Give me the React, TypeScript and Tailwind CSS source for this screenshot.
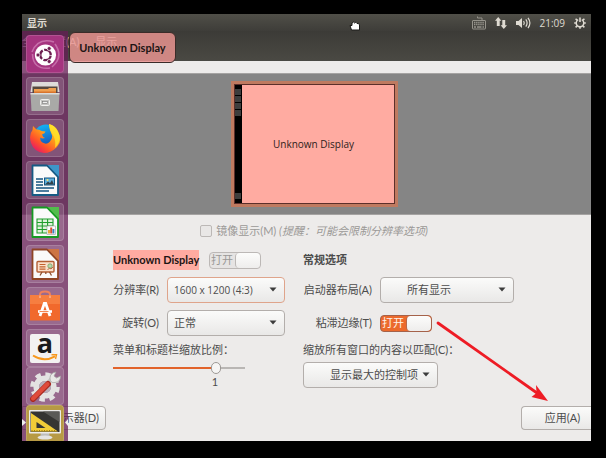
import { useState, type ReactNode } from "react";

const buttonLook =
  "border border-[#b3aeab] bg-linear-to-b from-[#fbfbfa] to-[#e9e8e7] text-[#4c4c4c]";

/* ---------- indicator icons ---------- */

function KeyboardIcon() {
  return (
    <svg width="14" height="14" viewBox="0 0 14 14" fill="none" stroke="#96948c" strokeWidth="1">
      <path d="M5.5 0.5v1.500h4.500V4" />
      <rect x="0.5" y="4.500" width="13" height="8.500" rx="0.5" />
      <path d="M2 6.500h10M2 8.500h10" strokeWidth="1.300" strokeDasharray="1.4 0.7" />
      <path d="M2 11h2M5 11h4.5M10.5 11H12" strokeWidth="1.300" />
    </svg>
  );
}

function NetworkIcon() {
  return (
    <svg width="12" height="12" viewBox="0 0 12 12" fill="#dfdbd2">
      <path d="M3.200 0 6.400 3.800H4.700V9H1.800V3.800H0z" />
      <path d="M8.800 12 5.600 8.200h1.700V3h2.900v5.200H12z" />
    </svg>
  );
}

function VolumeIcon() {
  return (
    <svg width="15" height="12" viewBox="0 0 15 12">
      <path d="M0 4h2.5L6 1v10L2.5 8H0z" fill="#dfdbd2" />
      <g fill="none" stroke="#dfdbd2" strokeWidth="1.2">
        <path d="M7.6 4q1.4 2 0 4" />
        <path d="M9.8 2.4q2.6 3.6 0 7.2" />
        <path d="M12 .8q3.8 5.2 0 10.4" />
      </g>
    </svg>
  );
}

function SessionIcon() {
  return (
    <svg width="12" height="12" viewBox="0 0 12 12" fill="none" stroke="#dfdbd2">
      <path d="M4.2 2.7a3.8 3.8 0 1 0 3.6 0" strokeWidth="1.5" />
      <path d="M6 .5v4.6" strokeWidth="1.6" />
      <path
        d="M2.9 3 1.6 1.7M9.1 3l1.3-1.3M1.9 6H.2M10.1 6h1.7M3 9 1.6 10.4M9 9l1.4 1.4M6 10v1.8"
        strokeWidth="1.6"
      />
    </svg>
  );
}

/* ---------- launcher icons, all on a 32 unit grid ---------- */

function DashIcon() {
  return (
    <svg viewBox="0 0 32 32" className="size-8">
      <g fill="none" stroke="#f0b4de" strokeOpacity="0.450" strokeWidth="1.6">
        <path d="M3 14Q9-1 25 4" />
        <path d="M26 6q9 13-3 23" />
        <path d="M21 30Q4 32 3.500 16" />
      </g>
      <circle cx="16.500" cy="17" r="10.600" fill="#fff" />
      <circle
        cx="16.500"
        cy="17"
        r="5.200"
        fill="none"
        stroke="#6d1f50"
        strokeWidth="2.3"
        strokeDasharray="9.4 1.49"
        strokeDashoffset="-0.7"
      />
      <g fill="#6d1f50" stroke="#fff" strokeWidth="0.7">
        <circle cx="9" cy="17" r="2" />
        <circle cx="20.200" cy="10.500" r="2" />
        <circle cx="20.200" cy="23.500" r="2" />
      </g>
    </svg>
  );
}

function FilesIcon() {
  return (
    <svg viewBox="0 0 32 32" className="size-8">
      <path d="M3 2h26l1.5 10h-29z" fill="#dedcda" />
      <rect x="3.5" y="6.5" width="25" height="9" fill="#57493f" />
      <path d="M5 9h14l1-1h7v7H5z" fill="#f0a050" />
      <path d="M5 11.5h22V15H5z" fill="#d9742c" />
      <path d="M1.5 13h29l-1 18H2.500z" fill="#a9a9a7" />
      <path d="M1.500 13h29v1.500h-29z" fill="#dcdcda" />
      <rect x="11.500" y="19.500" width="9" height="6" rx="1" fill="#c5c5c3" stroke="#efefed" />
      <rect x="13.500" y="21.500" width="5" height="2" fill="#eee" stroke="#777" strokeWidth="0.600" />
    </svg>
  );
}

function FirefoxIcon() {
  return (
    <svg viewBox="0 0 32 32" className="size-8">
      <defs>
        <linearGradient id="fox" x1="0.85" y1="0.1" x2="0.2" y2="0.9">
          <stop offset="0" stopColor="#ffe226" />
          <stop offset="0.4" stopColor="#ff9a1a" />
          <stop offset="0.75" stopColor="#ff4f2b" />
          <stop offset="1" stopColor="#e8205f" />
        </linearGradient>
        <linearGradient id="globe" x1="0.3" y1="0" x2="0.6" y2="1">
          <stop offset="0" stopColor="#12b5f5" />
          <stop offset="1" stopColor="#1743ad" />
        </linearGradient>
      </defs>
      <circle cx="17" cy="15" r="12.500" fill="url(#globe)" />
      <path
        d="M20 2q6 1 9 8 5 9-1 15-6 6-13 6Q5 30 2 21-.5 13 3.500 8l.5-4 3.500 3.500q3-.5 5 1.500l4 .5q-.5 2-3.500 3 .5 2.500 3 3.500-3 1-4.500-.5-1 3 2 5 4 2.500 7-.5 4-4 2-8-2-3.500-2.500-9.500z"
        fill="url(#fox)"
      />
      <path d="M20 2q8 2 10.500 11 1 8-4.500 13 1-7-1.500-12Q20 7 20 2z" fill="#ffe22a" fillOpacity="0.800" />
    </svg>
  );
}

function OfficeSheet({ edge, corner, children }: { edge: string; corner: string; children: ReactNode }) {
  return (
    <svg viewBox="0 0 32 32" className="size-8">
      <path d="M17 1h13v14z" fill={corner} />
      <path d="M3.500 1.500h14.500L29 13v18H3.500z" fill="#fafafa" stroke={edge} strokeWidth="1.800" strokeLinejoin="round" />
      {children}
    </svg>
  );
}

function WriterIcon() {
  return (
    <OfficeSheet edge="#155a84" corner="#3d96c9">
      <path d="M7 15h7M7 18h7M7 21h7M7 24h18M7 27h13" stroke="#155480" strokeWidth="1.600" />
      <rect x="15.500" y="14" width="10" height="7" fill="#5fb0dd" stroke="#155480" />
      <path d="m16 20.500 3-3 2 1.500 2-3 2 4.500z" fill="#35424a" />
      <circle cx="18.500" cy="16" r="1" fill="#ffe36b" />
    </OfficeSheet>
  );
}

function CalcIcon() {
  return (
    <OfficeSheet edge="#159a22" corner="#52bd4c">
      <rect x="8" y="13" width="16" height="14" fill="#def3da" />
      <path
        d="M8 13h16v14H8zM8 16.500h16M8 20h16M8 23.500h16M13.300 13v14M18.600 13v14"
        fill="none"
        stroke="#1f9e2c"
        strokeWidth="1.100"
      />
      <rect x="18" y="20" width="8.500" height="8.500" fill="#fff" stroke="#999" strokeWidth="0.600" />
      <path d="M19 24h2v3.500h-2z" fill="#e7a83a" />
      <path d="M21.200 21.500h2v6h-2z" fill="#d9502e" />
      <path d="M23.400 23h2v4.500h-2z" fill="#3f7fbe" />
    </OfficeSheet>
  );
}

function ImpressIcon() {
  return (
    <OfficeSheet edge="#8f4424" corner="#cd7443">
      <rect x="8" y="13.500" width="17" height="10.500" rx="1" fill="#fbe0cb" stroke="#b35f35" strokeWidth="1.400" />
      <path d="M10.500 16.500h6M10.500 18.800h6M10.500 21.200h6" stroke="#c2622e" strokeWidth="1.200" />
      <circle cx="21" cy="18" r="2.200" fill="#b9d8ae" stroke="#6a9a5a" strokeWidth="0.700" />
      <path d="m18.500 22 2-2 1.500 1 2-2" fill="none" stroke="#b35f35" strokeWidth="0.900" />
      <path d="m13 24-2 3.500M20.500 24l2 3.500M16.800 24v2" stroke="#8f4f2d" strokeWidth="1.300" />
    </OfficeSheet>
  );
}

function SoftwareIcon() {
  return (
    <svg viewBox="0 0 32 32" className="size-8">
      <path d="M11 8V4.500q0-3 5-3t5 3V8" fill="none" stroke="#f0805a" strokeWidth="2" />
      <path d="M1 5h30v25.500H1z" fill="#f1692c" />
      <path d="M1 5h30v9H1z" fill="#fa8c4e" fillOpacity="0.600" />
      <path d="M11 5.500V8M21 5.500V8" stroke="#f7b08e" strokeWidth="1.600" />
      <path d="M11 26 15.300 13.500h1.400L21 26" fill="none" stroke="#fff" strokeWidth="2.800" />
      <path d="M9 21.500h14" stroke="#fff" strokeWidth="2.600" />
      <path d="M10.500 21.500h9" stroke="#f1692c" strokeWidth="0.800" />
    </svg>
  );
}

function AmazonIcon() {
  return (
    <span className="flex h-[29px] w-[30px] flex-col items-center rounded-xs bg-[#f3f2f1]">
      <span className="h-5 font-['Open_Sans'] text-[27px] leading-[18px] font-bold text-[#1b1b1b]">a</span>
      <svg width="26" height="8" viewBox="0 0 26 8" fill="none" stroke="#f7981d">
        <path d="M1 1.500q11 7 22 .8" strokeWidth="2" />
        <path d="M19.500.8h5L23.500 5" strokeWidth="1.400" />
      </svg>
    </span>
  );
}

function SettingsIcon() {
  return (
    <svg viewBox="0 0 32 32" className="size-8">
      <circle cx="16" cy="17" r="12.800" fill="none" stroke="#e4e3e2" strokeWidth="4" strokeDasharray="5.400 4.650" />
      <circle cx="16" cy="17" r="8.800" fill="none" stroke="#e4e3e2" strokeWidth="5.500" />
      <circle cx="16" cy="17" r="6" fill="#b9aeb8" />
      <path d="M16 16 24 7" stroke="#c9c8c6" strokeWidth="4" />
      <path d="M21 8q0-5 6-6l-2 4 2.500 2 4-2q0 6-5.500 6.500-5 1-5-4.500z" fill="#e9e8e6" stroke="#a5a3a2" strokeWidth="0.700" />
      <path d="M4 29 19 14" stroke="#a92a20" strokeWidth="6" strokeLinecap="round" />
      <path d="M4 28.500 18.500 14" stroke="#df4b3b" strokeWidth="4" strokeLinecap="round" />
    </svg>
  );
}

function DisplayIcon() {
  return (
    <svg viewBox="0 0 32 32" className="size-8">
      <path d="M12 25h8l1 4H11z" fill="#bdbdbb" />
      <ellipse cx="16" cy="29.500" rx="7.500" ry="2" fill="#e4e4e2" />
      <rect x="0" y="2" width="32" height="23.500" rx="1" fill="#ecebea" />
      <rect x="1.500" y="3.500" width="29" height="20.500" fill="#353533" />
      <path d="M14 3.500h16.500V14z" fill="#5a5a57" />
      <path d="M2 5v18.500h27z" fill="#f1cc38" />
      <path d="M7.500 14v6h9z" fill="#353533" />
      <path d="M2.500 22.500h25" stroke="#a07d10" strokeDasharray="1 1.500" />
    </svg>
  );
}

const apps: { name: string; icon: ReactNode; tile: string }[] = [
  { name: "Dash", icon: <DashIcon />, tile: "bg-[#a5347f]" },
  { name: "Files", icon: <FilesIcon />, tile: "bg-white/15" },
  { name: "Firefox", icon: <FirefoxIcon />, tile: "bg-white/15" },
  { name: "Writer", icon: <WriterIcon />, tile: "bg-white/15" },
  { name: "Calc", icon: <CalcIcon />, tile: "bg-white/15" },
  { name: "Impress", icon: <ImpressIcon />, tile: "bg-white/15" },
  { name: "Software", icon: <SoftwareIcon />, tile: "bg-white/15" },
  { name: "Amazon", icon: <AmazonIcon />, tile: "bg-white/15" },
  { name: "Settings", icon: <SettingsIcon />, tile: "-mt-1 bg-white/15" },
  { name: "Displays", icon: <DisplayIcon />, tile: "-mt-1 bg-[#b79a44]" },
];

function Launcher() {
  return (
    <nav className="absolute top-[17px] bottom-0 left-0 flex w-[46px] flex-col items-center gap-1 overflow-hidden bg-[#651e56]/75 pt-1">
      {apps.map((app) => (
        <button
          key={app.name}
          aria-label={app.name}
          className={`flex h-[38px] w-[38px] shrink-0 items-center justify-center rounded-sm border border-white/15 ${app.tile}`}
        >
          {app.icon}
        </button>
      ))}
      <svg className="absolute bottom-[15px] left-0" width="4" height="7" viewBox="0 0 4 7" fill="#eee">
        <path d="M0 0l4 3.500L0 7z" />
      </svg>
      <svg className="absolute right-0 bottom-[15px]" width="3" height="7" viewBox="0 0 3 7" fill="#eee">
        <path d="M3 0 0 3.500 3 7z" />
      </svg>
    </nav>
  );
}

/* ---------- form parts ---------- */

function Dropdown({ id, value, look, width }: { id: string; value: string; look: string; width: string }) {
  return (
    <div className={`relative shrink-0 ${width}`}>
      <select
        id={id}
        className={`h-[26px] w-full appearance-none rounded-sm border bg-linear-to-b from-[#fbfbfa] to-[#e9e8e7] text-[#4c4c4c] ${look}`}
      >
        <option>{value}</option>
      </select>
      <svg
        className="pointer-events-none absolute top-[10px] right-2"
        width="8"
        height="5"
        viewBox="0 0 8 5"
        fill="#3c3c3c"
      >
        <path d="M.5.500h7L4 4.500z" />
      </svg>
    </div>
  );
}

function Switch({ id, label, disabled = false }: { id: string; label: string; disabled?: boolean }) {
  const [on, setOn] = useState(true);
  return (
    <label
      htmlFor={id}
      className={`flex h-[17px] w-[52px] shrink-0 items-center justify-between overflow-hidden rounded-sm border ${
        disabled ? "border-[#bcb8b6] bg-[#e6e4e3] text-[#9a9896]" : "border-[#a5624a] bg-[#ec6a2c] text-[#fff3ea]"
      }`}
    >
      <input
        id={id}
        type="checkbox"
        role="switch"
        aria-label={label}
        checked={on}
        disabled={disabled}
        onChange={(e) => setOn(e.target.checked)}
        className="sr-only"
      />
      <span className="pl-px leading-4">打开</span>
      <span
        className={`h-full w-[25px] rounded-sm border-l bg-linear-to-b from-[#fcfcfb] to-[#eeedec] ${
          disabled ? "border-[#bcb8b6]" : "border-[#b8694a]"
        }`}
      />
    </label>
  );
}

function MonitorPreview() {
  return (
    <div className="flex h-[126px] w-[167px] border-[3px] border-[#bf7a60] bg-[#ffaba1]">
      <div className="flex w-full border border-[#5c2f2a]">
        <div className="flex w-[7px] flex-col items-center bg-black py-1">
          <div className="flex flex-col gap-px">
            <span className="size-1.5 bg-[#3d3d3d]" />
            <span className="size-1.5 bg-[#3d3d3d]" />
            <span className="size-1.5 bg-[#3d3d3d]" />
            <span className="size-1.5 bg-[#3d3d3d]" />
          </div>
          <span className="mt-auto size-1.5 bg-[#3d3d3d]" />
        </div>
        <div className="flex flex-1 items-center justify-center pr-2 text-[#2e1d1b]">
          <span className="font-['Open_Sans'] text-[10px]">Unknown Display</span>
        </div>
      </div>
    </div>
  );
}

export default function App() {
  const [scale, setScale] = useState(1);
  return (
    <div className="flex min-h-screen flex-col bg-black pt-[14px] pr-[15px] pb-[17px] pl-[22px] font-['Lato','Noto_Sans_CJK_SC',sans-serif] text-[11px] leading-4 text-[#4c4c4c]">
      <div className="relative flex flex-1 flex-col overflow-hidden bg-[#edebea]">
        <header className="flex h-[17px] items-center bg-linear-to-b from-[#504f48] to-[#3e3d39] px-[5px] text-[#dfdbd2]">
          <span className="text-[10px] font-bold">显示</span>
          <div className="ml-auto flex items-center gap-[9px]">
            <KeyboardIcon />
            <NetworkIcon />
            <VolumeIcon />
            <time className="font-['Open_Sans'] text-[10px]">21:09</time>
            <SessionIcon />
          </div>
        </header>

        <div className="flex h-[30px] items-start gap-4 bg-linear-to-b from-[#3c3b37] to-[#4a4943] pt-[3px] text-[#f2efe9]">
          <button>全部设置(A)</button>
          <span>显示</span>
        </div>

        <section className="mt-3 flex justify-center border-y border-[#a5a3a2] bg-[#858585] py-[7px] pl-[15px]">
          <MonitorPreview />
        </section>

        <form className="flex flex-1 flex-col pt-2" onSubmit={(e) => e.preventDefault()}>
          <label className="flex items-center justify-center gap-1 pl-[15px] text-[#9b9997]">
            <input
              type="checkbox"
              disabled
              className="size-3 appearance-none rounded-xs border border-[#bcb8b6] bg-[#e9e7e6]"
            />
            <span>
              镜像显示(M) <i>(提醒：可能会限制分辨率选项)</i>
            </span>
          </label>

          <div className="mt-[11px] flex justify-center gap-[18px] pl-[14px]">
            <div className="flex w-[172px] flex-col">
              <div className="flex h-5 items-center justify-between pr-6">
                <strong className="bg-[#ffaba1] leading-5 whitespace-nowrap text-[#1c1413]">Unknown Display</strong>
                <Switch id="monitor-on" label="Unknown Display" disabled />
              </div>
              <div className="mt-[7px] flex items-center justify-end gap-2">
                <label htmlFor="resolution" className="whitespace-nowrap">
                  分辨率(R)
                </label>
                <Dropdown
                  id="resolution"
                  value="1600 x 1200 (4:3)"
                  look="border-[#dfa48b] pl-1.5 font-['Open_Sans'] text-[10px]"
                  width="w-[118px]"
                />
              </div>
              <div className="mt-[7px] flex items-center justify-end gap-2">
                <label htmlFor="rotation">旋转(O)</label>
                <Dropdown id="rotation" value="正常" look="border-[#b3aeab] pl-1.5" width="w-[118px]" />
              </div>
              <label htmlFor="scale" className="mt-1.5 whitespace-nowrap">
                菜单和标题栏缩放比例：
              </label>
              <input
                id="scale"
                type="range"
                min={0}
                max={1.25}
                step={0.125}
                value={scale}
                onChange={(e) => setScale(Number(e.target.value))}
                className="mt-1 h-3 w-[132px] appearance-none bg-linear-to-r from-[#e2632b] from-78% to-[#b9b6b4] to-78% bg-[length:100%_2px] bg-center bg-no-repeat [&::-webkit-slider-thumb]:h-3 [&::-webkit-slider-thumb]:w-2.5 [&::-webkit-slider-thumb]:appearance-none [&::-webkit-slider-thumb]:rounded-full [&::-webkit-slider-thumb]:border [&::-webkit-slider-thumb]:border-[#9d9996] [&::-webkit-slider-thumb]:bg-[#f6f5f4]"
              />
              <output htmlFor="scale" className="w-[204px] text-center">
                {scale}
              </output>
            </div>

            <div className="flex w-[211px] flex-col">
              <h2 className="h-5 leading-5 font-bold">常规选项</h2>
              <div className="mt-[7px] flex items-center gap-2">
                <label htmlFor="launcher-placement" className="w-[69px] text-right whitespace-nowrap">
                  启动器布局(A)
                </label>
                <Dropdown id="launcher-placement" value="所有显示" look="border-[#b3aeab] pl-[26px]" width="w-[134px]" />
              </div>
              <div className="mt-[7px] flex h-[26px] items-center gap-2">
                <label htmlFor="sticky" className="w-[69px] text-right whitespace-nowrap">
                  粘滞边缘(T)
                </label>
                <Switch id="sticky" label="粘滞边缘" />
              </div>
              <label htmlFor="scale-all" className="mt-1.5 whitespace-nowrap">
                缩放所有窗口的内容以匹配(C)：
              </label>
              <div className="mt-1">
                <Dropdown id="scale-all" value="显示最大的控制项" look="border-[#b3aeab] pl-[26px]" width="w-[135px]" />
              </div>
            </div>
          </div>

          <div className="mt-auto flex justify-between pb-[11px]">
            <button type="button" className={`h-6 w-[84px] rounded-r-sm pr-1.5 text-right ${buttonLook}`}>
              检测显示器(D)
            </button>
            <button type="submit" className={`h-6 w-[70px] rounded-l-sm border-r-0 pl-3 ${buttonLook}`}>
              应用(A)
            </button>
          </div>
        </form>

        <Launcher />

        <div
          role="tooltip"
          className="absolute top-[18px] left-[47px] flex h-[31px] w-[107px] items-center justify-center rounded-md border border-[#3a2b28] bg-[#e8938f]/85 font-bold whitespace-nowrap text-[#1c1413]"
        >
          Unknown Display
        </div>

        <svg className="absolute top-[7px] left-[327px]" width="12" height="10" viewBox="0 0 12 10">
          <path
            d="M1 4.500h2V2q1.500-2 2.500 0 1.500-2 2.500.5 2-1 2.500 1.500v5H2.500z"
            fill="#fff"
            stroke="#1a1a18"
          />
        </svg>

        <svg className="absolute top-[306px] left-[412px]" width="116" height="84" viewBox="0 0 116 84">
          <path d="M4 3 103 73" stroke="#ee1c25" strokeWidth="2.800" strokeLinecap="round" />
          <path d="M114 81 97.500 77l5-4-.500-8z" fill="#ee1c25" />
        </svg>
      </div>
    </div>
  );
}
